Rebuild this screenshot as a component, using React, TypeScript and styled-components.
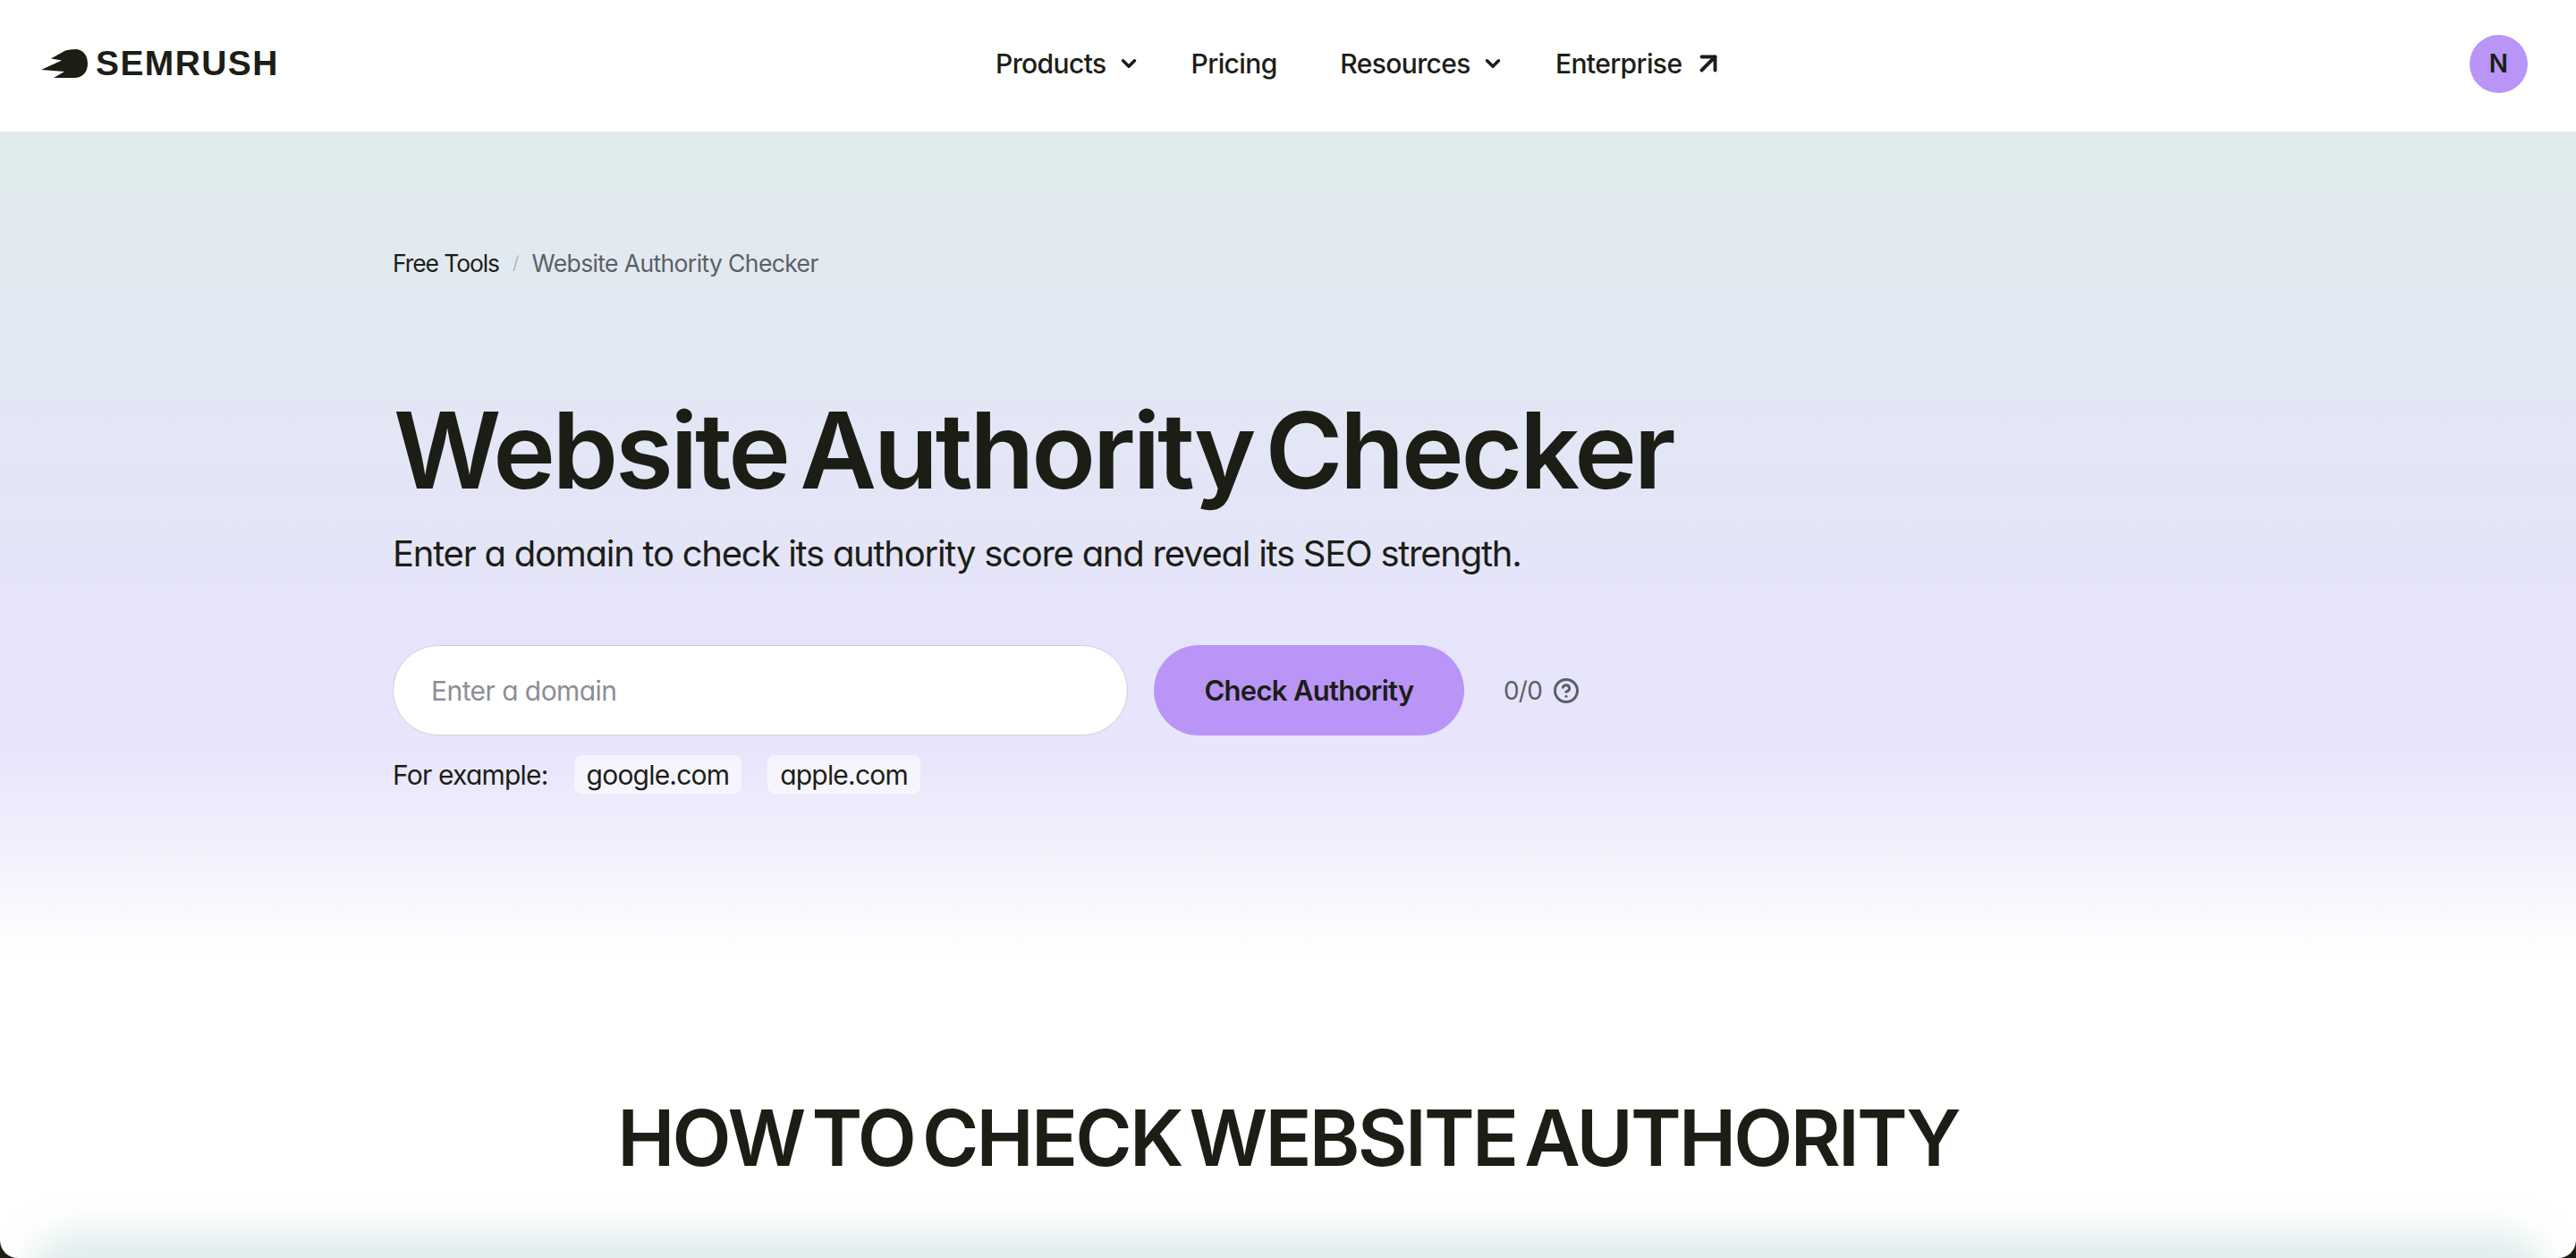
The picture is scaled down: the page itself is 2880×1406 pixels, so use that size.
import styled, { createGlobalStyle } from 'styled-components'
import { ChevronDown, ArrowUpRight, CircleHelp } from 'lucide-react'

const GlobalStyle = createGlobalStyle`
  html, body {
    margin: 0;
    padding: 0;
    background: #1c1e16;
  }
  body {
    font-family: Inter, "Liberation Sans", sans-serif;
    font-feature-settings: "cv11";
    color: #1c1e16;
  }
  * {
    box-sizing: border-box;
  }
`;

const Page = styled.div`
  height: 1406px;
  overflow: hidden;
  background: #fff;
  border-radius: 0 0 20px 20px;
`;

const Header = styled.header`
  height: 147px;
  padding: 0 54px 5px 46px;
  display: grid;
  grid-template-columns: 1067px auto 1fr;
  align-items: center;
  background: #fff;
`;

const Logo = styled.a`
  display: flex;
  align-items: center;
  gap: 9px;
`;

const LogoText = styled.span`
  font-family: "Liberation Sans", Arial, sans-serif;
  font-size: 39px;
  font-weight: 700;
  letter-spacing: 1.4px;
`;

const Nav = styled.nav`
  display: flex;
  align-items: center;
  gap: 57px;
`;

const NavItem = styled.a<{ $spaced?: boolean }>`
  display: flex;
  align-items: center;
  gap: 12px;
  margin-right: ${(p) => (p.$spaced ? '13.5px' : '0')};
  font-size: 30px;
  font-weight: 500;
  letter-spacing: -0.6px;
`;

const Avatar = styled.div`
  justify-self: end;
  width: 65px;
  height: 65px;
  border-radius: 50%;
  background: #b995f7;
  display: flex;
  align-items: center;
  justify-content: center;
  font-size: 28px;
  font-weight: 600;
`;

const Hero = styled.section`
  height: 923px;
  padding: 131px 0 0 439px;
  background: linear-gradient(180deg, #e0ecec 0%, #e2e8f3 25%, #e5e4f9 55%, #e8e5fc 75%, #f4f1fd 88%, #ffffff 100%);
`;

const Breadcrumbs = styled.div`
  display: flex;
  align-items: center;
  gap: 15px;
  font-size: 26.5px;
  letter-spacing: -0.62px;
`;

const Root = styled.span`
  letter-spacing: -1.1px;
`;

const Slash = styled.span`
  color: #b4b8bf;
  font-size: 20px;
`;

const Current = styled.span`
  color: #5c5f66;
`;

const Title = styled.h1`
  margin: 130px 0 0 1px;
  font-size: 118px;
  line-height: 126px;
  font-weight: 600;
  letter-spacing: -3.3px;
  word-spacing: -13px;
`;

const Subtitle = styled.p`
  margin: 27px 0 0;
  font-size: 40px;
  line-height: 52px;
  letter-spacing: -1.25px;
`;

const SearchRow = styled.div`
  margin-top: 76px;
  display: flex;
  align-items: center;
`;

const DomainInput = styled.input`
  width: 822px;
  height: 101px;
  padding: 0 42px;
  border: 1.5px solid #cdcfdc;
  border-radius: 51px;
  background: #fff;
  font-family: inherit;
  font-feature-settings: inherit;
  font-size: 30px;
  letter-spacing: -0.56px;
  outline: none;

  &::placeholder {
    color: #8b8e96;
    opacity: 1;
  }
`;

const CheckButton = styled.button`
  width: 347px;
  height: 101px;
  margin-left: 29px;
  border: none;
  border-radius: 51px;
  background: #b995f7;
  color: #1c1e16;
  font-family: inherit;
  font-size: 31px;
  font-weight: 600;
  letter-spacing: -0.7px;
`;

const Limit = styled.div`
  margin-left: 44px;
  display: flex;
  align-items: center;
  gap: 12px;
  color: #5c5f66;
  font-size: 28px;
  letter-spacing: -0.8px;
`;

const Examples = styled.div`
  margin-top: 22px;
  display: flex;
  align-items: center;
  gap: 29px;
  font-size: 30px;
  letter-spacing: -0.8px;
`;

const Chip = styled.span`
  height: 43px;
  padding: 0 14px;
  display: flex;
  align-items: center;
  border-radius: 8px;
  background: rgba(255, 255, 255, 0.55);
`;

const HowTo = styled.section`
  padding-top: 152px;
  text-align: center;
`;

const HowToTitle = styled.h2`
  margin: 0;
  font-size: 86px;
  line-height: 100px;
  font-weight: 600;
  letter-spacing: -2.75px;
  word-spacing: -10px;
`;

const StepsCard = styled.div`
  height: 200px;
  margin: 54px 30px 0;
  border-radius: 60px;
  background: #e0ecec;
  filter: blur(18px);
`;

export default function App() {
  return (
    <Page>
      <GlobalStyle />
      <Header>
        <Logo>
          <svg width="52" height="33" viewBox="0 0 52 33">
            <path d="M0 23 L23 12.5 L11 10.5 L27 1.5 Q32 0 38 0 C47 0 52 7 52 16 C52 26 46 32 37 32 L14 32 L26 25 Z" fill="#1c1e16" />
          </svg>
          <LogoText>SEMRUSH</LogoText>
        </Logo>
        <Nav>
          <NavItem>Products <ChevronDown size={26} strokeWidth={3.2} /></NavItem>
          <NavItem $spaced>Pricing</NavItem>
          <NavItem>Resources <ChevronDown size={26} strokeWidth={3.2} /></NavItem>
          <NavItem>Enterprise <ArrowUpRight size={36} strokeWidth={2.6} /></NavItem>
        </Nav>
        <Avatar>N</Avatar>
      </Header>
      <Hero>
        <Breadcrumbs>
          <Root>Free Tools</Root>
          <Slash>/</Slash>
          <Current>Website Authority Checker</Current>
        </Breadcrumbs>
        <Title>Website Authority Checker</Title>
        <Subtitle>Enter a domain to check its authority score and reveal its SEO strength.</Subtitle>
        <SearchRow>
          <DomainInput placeholder="Enter a domain" />
          <CheckButton>Check Authority</CheckButton>
          <Limit>0/0 <CircleHelp size={30} strokeWidth={2.4} /></Limit>
        </SearchRow>
        <Examples>
          <span>For example:</span>
          <Chip>google.com</Chip>
          <Chip>apple.com</Chip>
        </Examples>
      </Hero>
      <HowTo>
        <HowToTitle>HOW TO CHECK WEBSITE AUTHORITY</HowToTitle>
        <StepsCard />
      </HowTo>
    </Page>
  )
}
